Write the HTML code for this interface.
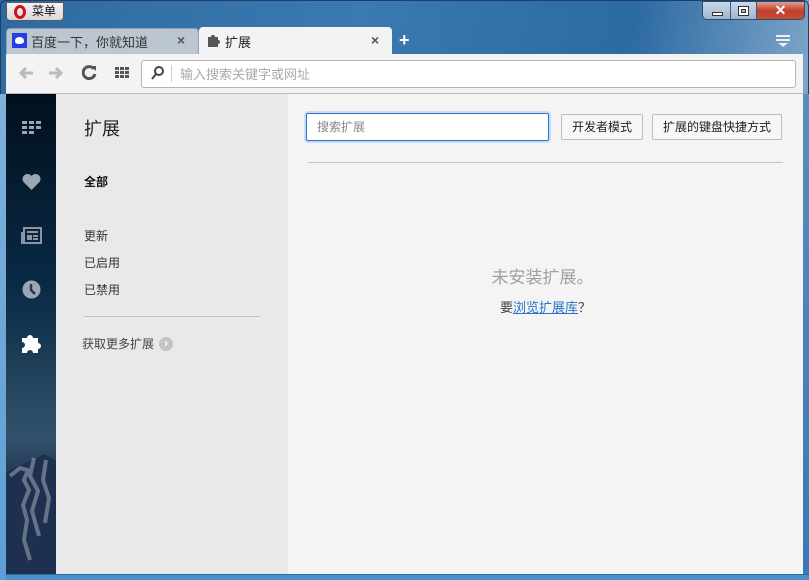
<!DOCTYPE html>
<html><head><meta charset="utf-8"><style>
*{margin:0;padding:0;box-sizing:border-box}
body{width:809px;height:580px;overflow:hidden;font-family:"Liberation Sans","Noto Sans CJK SC",sans-serif;font-size:12px;position:relative;background:linear-gradient(100deg,#2e6aa0 0%,#3a7ab0 40%,#2c6aa2 70%,#7ba4c8 90%,#2e6aa0 100%)}
.abs{position:absolute}
</style></head><body>
<div class="abs" style="left:0;top:0;width:809px;height:580px;border:1px solid #1d3f63;border-radius:6px 6px 0 0"></div>
<div class="abs" style="left:6px;top:2px;width:58px;height:19px;background:linear-gradient(#f4f4f4,#d8d8d8);border:1px solid #5a5a5a;border-radius:0 0 4px 4px;font-size:12px;line-height:17px;padding-left:25px;color:#111">菜单</div>
<div class="abs" style="left:14px;top:5px;width:12px;height:14px;border:3px solid #d0121a;border-radius:50%"></div>
<div class="abs" style="left:702px;top:1px;width:103px;height:19px;border:1px solid #2b4a6e;border-radius:0 0 5px 5px;overflow:hidden;display:flex">
<div style="width:28px;background:linear-gradient(#c9d8e8,#9fb6cf);border-right:1px solid #3d5a7c;position:relative"><div class="abs" style="left:9px;top:10px;width:11px;height:4px;background:#fff;border:1px solid #333"></div></div>
<div style="width:26px;background:linear-gradient(#c9d8e8,#9fb6cf);border-right:1px solid #3d5a7c;position:relative"><div class="abs" style="left:7px;top:4px;width:11px;height:10px;border:1px solid #333;background:#fff"><div style="margin:2px;height:4px;border:1px solid #333;background:#9fb6cf"></div></div></div>
<div style="flex:1;background:linear-gradient(#e0a090,#c2402c 50%,#c84c34);color:#fff;font-weight:bold;text-align:center;line-height:17px;font-size:14px">✕</div>
</div>
<div class="abs" style="left:6px;top:28px;width:193px;height:27px;background:#bcc6d0;border-radius:4px 4px 0 0;border:1px solid #8aa0b6;border-bottom:none"></div>
<div class="abs" style="left:12px;top:33px;width:15px;height:15px;border:1px solid #1e3cf0;background:#2a3ee0"><div style="margin:3px 2px;width:9px;height:7px;background:#fff;border-radius:50% 50% 40% 40%"></div></div>
<div class="abs" style="left:31px;top:32px;font-size:13px;color:#333">百度一下，你就知道</div>
<div class="abs" style="left:177px;top:32px;font-size:14px;color:#555;font-weight:bold">×</div>
<div class="abs" style="left:199px;top:27px;width:193px;height:28px;background:#f3f3f3;border-radius:4px 4px 0 0"></div>
<svg class="abs" style="left:207px;top:33px" width="14" height="14" viewBox="0 0 14 14"><path d="M1 4h3a2 2 0 1 1 4 0h3v3a2 2 0 1 1 0 4v3H1z" fill="#555"/></svg>
<div class="abs" style="left:225px;top:32px;font-size:13px;color:#222">扩展</div>
<div class="abs" style="left:371px;top:32px;font-size:14px;color:#555;font-weight:bold">×</div>
<div class="abs" style="left:399px;top:30px;font-size:18px;color:#fff;font-weight:bold">+</div>
<svg class="abs" style="left:776px;top:34px" width="14" height="14"><rect x="0" y="1" width="14" height="2" fill="#eee"/><rect x="0" y="5" width="14" height="2" fill="#eee"/><path d="M2 9h10l-5 4z" fill="#eee"/></svg>
<div class="abs" style="left:6px;top:54px;width:797px;height:40px;background:#f3f3f3;border-bottom:1px solid #bbb"></div>
<svg class="abs" style="left:18px;top:66px" width="16" height="14"><path d="M15 7H3M8 2L3 7l5 5" stroke="#bbb" stroke-width="3" fill="none"/></svg>
<svg class="abs" style="left:48px;top:66px" width="16" height="14"><path d="M1 7h12M8 2l5 5-5 5" stroke="#bbb" stroke-width="3" fill="none"/></svg>
<svg class="abs" style="left:82px;top:65px" width="15" height="15"><path d="M12 4A6 6 0 1 0 13 9" stroke="#555" stroke-width="3" fill="none"/><path d="M9 1h5v5z" fill="#555"/></svg>
<svg class="abs" style="left:115px;top:67px" width="14" height="11"><g fill="#555"><rect x="0" y="0" width="4" height="3"/><rect x="5" y="0" width="4" height="3"/><rect x="10" y="0" width="4" height="3"/><rect x="0" y="4" width="4" height="3"/><rect x="5" y="4" width="4" height="3"/><rect x="10" y="4" width="4" height="3"/><rect x="0" y="8" width="4" height="3"/><rect x="5" y="8" width="4" height="3"/><rect x="10" y="8" width="4" height="3"/></g></svg>
<div class="abs" style="left:141px;top:60px;width:655px;height:28px;background:#fff;border:1px solid #b4b4b4;border-radius:3px"></div>
<svg class="abs" style="left:151px;top:65px" width="14" height="16"><circle cx="8" cy="6" r="4" fill="none" stroke="#444" stroke-width="2"/><path d="M5 9l-4 5" stroke="#444" stroke-width="2"/></svg>
<div class="abs" style="left:171px;top:65px;width:1px;height:17px;background:#ccc"></div>
<div class="abs" style="left:180px;top:64px;font-size:13px;color:#aaa">输入搜索关键字或网址</div>
<div class="abs" style="left:6px;top:94px;width:50px;height:480px;background:linear-gradient(#01101e 0%,#0a2a45 40%,#2e4d66 68%,#31506b 72%,#1a2a44 85%,#26344a 100%)"></div>
<svg class="abs" style="left:6px;top:450px" width="50" height="124"><path d="M0 22l12-6 14-6 12-6 8 4 4 2V124H0z" fill="#1e3050"/><path d="M4 26l10-8 8 2-4 10 5 10-6 15 4 15-3 20 6 20M28 8l-4 18 8 15-6 20 7 25M40 10l-3 20 6 18-4 25" stroke="#c0c4cc" stroke-width="4" fill="none" opacity=".45"/></svg>
<svg class="abs" style="left:22px;top:121px" width="19" height="13"><g fill="#9aa6b4"><rect x="0" y="0" width="5" height="3"/><rect x="7" y="0" width="5" height="3"/><rect x="14" y="0" width="5" height="3"/><rect x="0" y="5" width="5" height="3"/><rect x="7" y="5" width="5" height="3"/><rect x="14" y="5" width="5" height="3"/><rect x="0" y="10" width="5" height="3"/><rect x="7" y="10" width="5" height="3"/></g></svg>
<svg class="abs" style="left:22px;top:173px" width="19" height="17" viewBox="0 0 19 17"><path d="M9.5 17L1.5 9A4.6 4.6 0 0 1 9.5 3 4.6 4.6 0 0 1 17.5 9z" fill="#9aa6b4"/></svg>
<svg class="abs" style="left:21px;top:227px" width="21" height="17"><rect x="3" y="1" width="17" height="15" fill="none" stroke="#8a96a4" stroke-width="2"/><path d="M1 5v11h3" fill="none" stroke="#8a96a4" stroke-width="2"/><g fill="#8a96a4"><rect x="6" y="4" width="11" height="2"/><rect x="6" y="8" width="5" height="5"/><rect x="12" y="8" width="5" height="2"/><rect x="12" y="11" width="5" height="2"/></g></svg>
<svg class="abs" style="left:22px;top:280px" width="19" height="19"><circle cx="9.5" cy="9.5" r="9" fill="#9aa6b4"/><path d="M9 4v6l4 4" stroke="#1e3a56" stroke-width="2.4" fill="none"/></svg>
<svg class="abs" style="left:21px;top:332px" width="22" height="22" viewBox="0 0 22 22"><path d="M1 6h5a3 3 0 1 1 6 0h5v5a3 3 0 1 1 0 6v4h-5a3 3 0 1 0-6 0H1v-5a3 3 0 1 0 0-6z" fill="#fff"/></svg>
<div class="abs" style="left:56px;top:94px;width:232px;height:480px;background:#e9e9e9"></div>
<div class="abs" style="left:84px;top:115px;font-size:18px;color:#222">扩展</div>
<div class="abs" style="left:84px;top:173px;font-size:12px;color:#111;font-weight:bold">全部</div>
<div class="abs" style="left:84px;top:227px;font-size:12px;color:#333">更新</div>
<div class="abs" style="left:84px;top:254px;font-size:12px;color:#333">已启用</div>
<div class="abs" style="left:84px;top:281px;font-size:12px;color:#333">已禁用</div>
<div class="abs" style="left:84px;top:316px;width:176px;height:1px;background:#c4c4c4"></div>
<div class="abs" style="left:82px;top:335px;font-size:12px;color:#444">获取更多扩展</div>
<div class="abs" style="left:159px;top:337px;width:14px;height:14px;border-radius:50%;background:#c4c4c4;color:#fff;font-size:12px;line-height:13px;text-align:center;font-weight:bold">›</div>
<div class="abs" style="left:288px;top:94px;width:515px;height:480px;background:#f4f4f4"></div>
<div class="abs" style="left:306px;top:113px;width:243px;height:28px;background:#fff;border:1px solid #2a73c8;border-radius:2px;box-shadow:0 0 0 2px #c7ddf3;font-size:12px;color:#888;line-height:26px;padding-left:10px">搜索扩展</div>
<div class="abs" style="left:561px;top:114px;width:82px;height:26px;border:1px solid #bdbdbd;border-radius:2px;background:#f7f7f7;font-size:12px;color:#222;line-height:24px;text-align:center">开发者模式</div>
<div class="abs" style="left:652px;top:114px;width:130px;height:26px;border:1px solid #bdbdbd;border-radius:2px;background:#f7f7f7;font-size:12px;color:#222;line-height:24px;text-align:center">扩展的键盘快捷方式</div>
<div class="abs" style="left:308px;top:162px;width:475px;height:1px;background:#c4c4c4"></div>
<div class="abs" style="left:285px;top:263px;width:515px;text-align:center;font-size:17px;color:#a0a0a0">未安装扩展。</div>
<div class="abs" style="left:288px;top:297px;width:515px;text-align:center;font-size:13px;color:#444">要<span style="color:#2a73c8;text-decoration:underline">浏览扩展库</span>？</div>
<div class="abs" style="left:803px;top:94px;width:6px;height:486px;background:linear-gradient(#5c8cbc,#3a78b6)"></div>
<div class="abs" style="left:0;top:574px;width:809px;height:6px;background:#4f90c8;border-top:1px solid #2a6aa4"></div>
<div class="abs" style="left:0;top:94px;width:6px;height:486px;background:linear-gradient(#7fb0da,#5e9ed4)"></div>
</body></html>
